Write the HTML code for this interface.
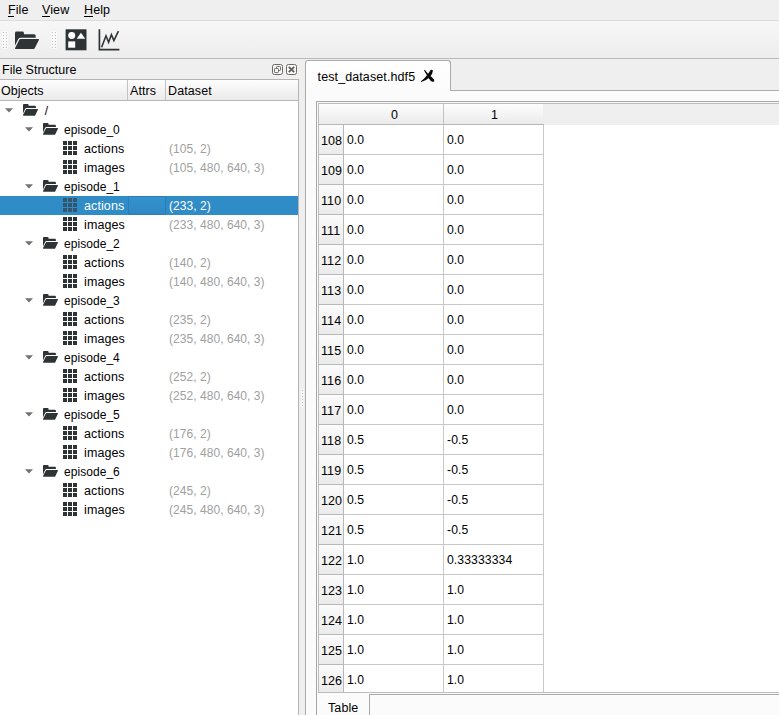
<!DOCTYPE html>
<html><head><meta charset="utf-8"><title>hdf5view</title>
<style>
html,body{margin:0;padding:0;}
body{width:779px;height:715px;overflow:hidden;position:relative;background:#efefef;
 font-family:"Liberation Sans",sans-serif;font-size:12.5px;letter-spacing:0.1px;color:#000;}
.a{position:absolute;}
.t{position:absolute;white-space:nowrap;line-height:16px;height:16px;}
.g{color:#a0a0a0;}
.sel{color:#fff;}
.n{font-size:12px;letter-spacing:0.05px;}
.c{font-size:12.2px;letter-spacing:0.09px;}
svg{position:absolute;overflow:visible;}
</style></head><body>

<div class="a" style="left:0;top:20px;width:779px;height:1px;background:#dcdcdc"></div>
<div class="t" style="left:8px;top:2px">File</div>
<div class="a" style="left:8px;top:16px;width:6px;height:1px;background:#000"></div>
<div class="t" style="left:42px;top:2px">View</div>
<div class="a" style="left:42px;top:16px;width:8px;height:1px;background:#000"></div>
<div class="t" style="left:84px;top:2px">Help</div>
<div class="a" style="left:84px;top:16px;width:9px;height:1px;background:#000"></div>
<div class="a" style="left:0;top:21px;width:779px;height:37px;background:linear-gradient(#f7f7f7,#ededed)"></div>
<div class="a" style="left:0;top:58px;width:779px;height:1px;background:#b9b9b9"></div>
<div class="a" style="left:2px;top:31px;width:6px;height:18px;background:rgba(255,255,255,0.55)"></div><div class="a" style="left:3px;top:32px;width:1px;height:1px;background:#bdbdbd"></div><div class="a" style="left:6px;top:32px;width:1px;height:1px;background:#bdbdbd"></div><div class="a" style="left:3px;top:35px;width:1px;height:1px;background:#bdbdbd"></div><div class="a" style="left:6px;top:35px;width:1px;height:1px;background:#bdbdbd"></div><div class="a" style="left:3px;top:38px;width:1px;height:1px;background:#bdbdbd"></div><div class="a" style="left:6px;top:38px;width:1px;height:1px;background:#bdbdbd"></div><div class="a" style="left:3px;top:41px;width:1px;height:1px;background:#bdbdbd"></div><div class="a" style="left:6px;top:41px;width:1px;height:1px;background:#bdbdbd"></div><div class="a" style="left:3px;top:44px;width:1px;height:1px;background:#bdbdbd"></div><div class="a" style="left:6px;top:44px;width:1px;height:1px;background:#bdbdbd"></div><div class="a" style="left:3px;top:47px;width:1px;height:1px;background:#bdbdbd"></div><div class="a" style="left:6px;top:47px;width:1px;height:1px;background:#bdbdbd"></div>
<div class="a" style="left:51px;top:31px;width:6px;height:18px;background:rgba(255,255,255,0.55)"></div><div class="a" style="left:52px;top:32px;width:1px;height:1px;background:#bdbdbd"></div><div class="a" style="left:55px;top:32px;width:1px;height:1px;background:#bdbdbd"></div><div class="a" style="left:52px;top:35px;width:1px;height:1px;background:#bdbdbd"></div><div class="a" style="left:55px;top:35px;width:1px;height:1px;background:#bdbdbd"></div><div class="a" style="left:52px;top:38px;width:1px;height:1px;background:#bdbdbd"></div><div class="a" style="left:55px;top:38px;width:1px;height:1px;background:#bdbdbd"></div><div class="a" style="left:52px;top:41px;width:1px;height:1px;background:#bdbdbd"></div><div class="a" style="left:55px;top:41px;width:1px;height:1px;background:#bdbdbd"></div><div class="a" style="left:52px;top:44px;width:1px;height:1px;background:#bdbdbd"></div><div class="a" style="left:55px;top:44px;width:1px;height:1px;background:#bdbdbd"></div><div class="a" style="left:52px;top:47px;width:1px;height:1px;background:#bdbdbd"></div><div class="a" style="left:55px;top:47px;width:1px;height:1px;background:#bdbdbd"></div>
<svg style="left:10px;top:24px" width="114" height="30" viewBox="10 24 114 30"><path fill="#2e3436" d="M15 33 Q15 31.6 16.4 31.6 H22.6 Q23.9 31.6 23.9 32.9 V34.2 H34.2 Q35.7 34.2 35.7 35.7 V37.7 H20.6 Q19 37.7 18.3 39.1 L15 45.6 Z"/><path fill="#2e3436" d="M20.7 38.9 H38.2 Q39.5 38.9 38.9 40 L34.7 48.3 Q34.3 49.1 33.4 49.1 H15.7 Q14.5 49.1 15.1 48.1 L19.3 39.8 Q19.8 38.9 20.7 38.9 Z"/><rect x="65.6" y="29.3" width="20.9" height="21" fill="#2e3436"/><ellipse cx="71.7" cy="35.5" rx="3.5" ry="3.4" fill="#fff"/><path d="M80.95 32.8 L85.2 38.8 H76.7Z" fill="#fff"/><rect x="68.2" y="41.4" width="7" height="6.3" fill="#fff"/><path d="M99.4 29.3 V49.6 H119.4" fill="none" stroke="#2e3436" stroke-width="1.7"/><path d="M101.6 47.2 L106 35.8 L108.6 42.2 L111.4 34.6 L113.9 40.6 L118.4 31.2" fill="none" stroke="#2e3436" stroke-width="1.6" stroke-linejoin="miter"/></svg>
<div class="t" style="left:2px;top:62px;letter-spacing:0">File Structure</div>
<svg style="left:272px;top:64px" width="11" height="11" viewBox="0 0 11 11"><rect x="0.5" y="0.5" width="10" height="10" rx="2" fill="#f7f7f7" stroke="#6c6965"/><rect x="4.5" y="2.5" width="4" height="4" rx="0.8" fill="none" stroke="#6c6965"/><rect x="2.5" y="4.5" width="4" height="4" rx="0.8" fill="#f7f7f7" stroke="#6c6965"/></svg>
<svg style="left:286px;top:64px" width="11" height="11" viewBox="0 0 11 11"><rect x="0.5" y="0.5" width="10" height="10" rx="2" fill="#f7f7f7" stroke="#6c6965"/><path d="M2.8 2.8 L8.2 8.2 M8.2 2.8 L2.8 8.2" stroke="#605d5a" stroke-width="1.8"/></svg>
<div class="a" style="left:0;top:79px;width:298px;height:640px;background:#fff"></div>
<div class="a" style="left:298px;top:79px;width:1px;height:640px;background:#b4b4b4"></div>
<div class="a" style="left:0;top:79px;width:299px;height:1px;background:#b4b4b4"></div>
<div class="a" style="left:0;top:80px;width:298px;height:20px;background:linear-gradient(#fdfdfd,#ebebeb)"></div>
<div class="a" style="left:0;top:100px;width:298px;height:1px;background:#b8b8b8"></div>
<div class="a" style="left:127px;top:80px;width:1px;height:20px;background:#c2c2c2"></div>
<div class="a" style="left:165px;top:80px;width:1px;height:20px;background:#c2c2c2"></div>
<div class="t" style="left:1px;top:83px;letter-spacing:0">Objects</div>
<div class="t" style="left:130px;top:83px">Attrs</div>
<div class="t" style="left:168px;top:83px">Dataset</div>
<svg style="left:5px;top:108px" width="8" height="5" viewBox="0 0 8 5"><path d="M0 0.3 H8 L4 4.6Z" fill="#727272"/></svg>
<svg style="left:23px;top:102px" width="16" height="16" viewBox="0 0 16 16"><g transform="translate(0,2) scale(0.624,0.674) translate(-15,-31.6)" fill="#2e3436"><path d="M15 33 Q15 31.6 16.4 31.6 H22.6 Q23.9 31.6 23.9 32.9 V34.2 H34.2 Q35.7 34.2 35.7 35.7 V37.5 H20.6 Q19 37.5 18.3 38.9 L15 45.6 Z"/><path d="M20.7 39.1 H38.2 Q39.5 39.1 38.9 40.2 L34.7 48.3 Q34.3 49.1 33.4 49.1 H15.7 Q14.5 49.1 15.1 48.1 L19.3 40 Q19.8 39.1 20.7 39.1 Z"/></g></svg>
<div class="t n" style="left:44.7px;top:103px">/</div>
<svg style="left:25px;top:127px" width="8" height="5" viewBox="0 0 8 5"><path d="M0 0.3 H8 L4 4.6Z" fill="#727272"/></svg>
<svg style="left:43px;top:121px" width="16" height="16" viewBox="0 0 16 16"><g transform="translate(0,2) scale(0.624,0.674) translate(-15,-31.6)" fill="#2e3436"><path d="M15 33 Q15 31.6 16.4 31.6 H22.6 Q23.9 31.6 23.9 32.9 V34.2 H34.2 Q35.7 34.2 35.7 35.7 V37.5 H20.6 Q19 37.5 18.3 38.9 L15 45.6 Z"/><path d="M20.7 39.1 H38.2 Q39.5 39.1 38.9 40.2 L34.7 48.3 Q34.3 49.1 33.4 49.1 H15.7 Q14.5 49.1 15.1 48.1 L19.3 40 Q19.8 39.1 20.7 39.1 Z"/></g></svg>
<div class="t n" style="left:64px;top:122px">episode_0</div>
<svg style="left:62px;top:140px" width="16" height="16" viewBox="0 0 16 16"><rect x="1" y="1" width="4" height="4" fill="#2e3436"/><rect x="6" y="1" width="4" height="4" fill="#2e3436"/><rect x="11" y="1" width="4" height="4" fill="#2e3436"/><rect x="1" y="6" width="4" height="4" fill="#2e3436"/><rect x="6" y="6" width="4" height="4" fill="#2e3436"/><rect x="11" y="6" width="4" height="4" fill="#2e3436"/><rect x="1" y="11" width="4" height="4" fill="#2e3436"/><rect x="6" y="11" width="4" height="4" fill="#2e3436"/><rect x="11" y="11" width="4" height="4" fill="#2e3436"/></svg>
<div class="t" style="left:84px;top:141px">actions</div>
<div class="t g n" style="left:169px;top:141px">(105, 2)</div>
<svg style="left:62px;top:159px" width="16" height="16" viewBox="0 0 16 16"><rect x="1" y="1" width="4" height="4" fill="#2e3436"/><rect x="6" y="1" width="4" height="4" fill="#2e3436"/><rect x="11" y="1" width="4" height="4" fill="#2e3436"/><rect x="1" y="6" width="4" height="4" fill="#2e3436"/><rect x="6" y="6" width="4" height="4" fill="#2e3436"/><rect x="11" y="6" width="4" height="4" fill="#2e3436"/><rect x="1" y="11" width="4" height="4" fill="#2e3436"/><rect x="6" y="11" width="4" height="4" fill="#2e3436"/><rect x="11" y="11" width="4" height="4" fill="#2e3436"/></svg>
<div class="t" style="left:84px;top:160px">images</div>
<div class="t g n" style="left:169px;top:160px">(105, 480, 640, 3)</div>
<svg style="left:25px;top:184px" width="8" height="5" viewBox="0 0 8 5"><path d="M0 0.3 H8 L4 4.6Z" fill="#727272"/></svg>
<svg style="left:43px;top:178px" width="16" height="16" viewBox="0 0 16 16"><g transform="translate(0,2) scale(0.624,0.674) translate(-15,-31.6)" fill="#2e3436"><path d="M15 33 Q15 31.6 16.4 31.6 H22.6 Q23.9 31.6 23.9 32.9 V34.2 H34.2 Q35.7 34.2 35.7 35.7 V37.5 H20.6 Q19 37.5 18.3 38.9 L15 45.6 Z"/><path d="M20.7 39.1 H38.2 Q39.5 39.1 38.9 40.2 L34.7 48.3 Q34.3 49.1 33.4 49.1 H15.7 Q14.5 49.1 15.1 48.1 L19.3 40 Q19.8 39.1 20.7 39.1 Z"/></g></svg>
<div class="t n" style="left:64px;top:179px">episode_1</div>
<div class="a" style="left:0;top:196px;width:298px;height:19px;background:#308cc6"></div>
<div class="a" style="left:128px;top:196px;width:38px;height:19px;box-sizing:border-box;border:1px solid #2b7eb5;background:linear-gradient(#3492ce,#2f88c2)"></div>
<svg style="left:62px;top:197px" width="16" height="16" viewBox="0 0 16 16"><rect x="1" y="1" width="4" height="4" fill="#34566d"/><rect x="6" y="1" width="4" height="4" fill="#34566d"/><rect x="11" y="1" width="4" height="4" fill="#34566d"/><rect x="1" y="6" width="4" height="4" fill="#34566d"/><rect x="6" y="6" width="4" height="4" fill="#34566d"/><rect x="11" y="6" width="4" height="4" fill="#34566d"/><rect x="1" y="11" width="4" height="4" fill="#34566d"/><rect x="6" y="11" width="4" height="4" fill="#34566d"/><rect x="11" y="11" width="4" height="4" fill="#34566d"/></svg>
<div class="t sel" style="left:84px;top:198px">actions</div>
<div class="t sel n" style="left:169px;top:198px">(233, 2)</div>
<svg style="left:62px;top:216px" width="16" height="16" viewBox="0 0 16 16"><rect x="1" y="1" width="4" height="4" fill="#2e3436"/><rect x="6" y="1" width="4" height="4" fill="#2e3436"/><rect x="11" y="1" width="4" height="4" fill="#2e3436"/><rect x="1" y="6" width="4" height="4" fill="#2e3436"/><rect x="6" y="6" width="4" height="4" fill="#2e3436"/><rect x="11" y="6" width="4" height="4" fill="#2e3436"/><rect x="1" y="11" width="4" height="4" fill="#2e3436"/><rect x="6" y="11" width="4" height="4" fill="#2e3436"/><rect x="11" y="11" width="4" height="4" fill="#2e3436"/></svg>
<div class="t" style="left:84px;top:217px">images</div>
<div class="t g n" style="left:169px;top:217px">(233, 480, 640, 3)</div>
<svg style="left:25px;top:241px" width="8" height="5" viewBox="0 0 8 5"><path d="M0 0.3 H8 L4 4.6Z" fill="#727272"/></svg>
<svg style="left:43px;top:235px" width="16" height="16" viewBox="0 0 16 16"><g transform="translate(0,2) scale(0.624,0.674) translate(-15,-31.6)" fill="#2e3436"><path d="M15 33 Q15 31.6 16.4 31.6 H22.6 Q23.9 31.6 23.9 32.9 V34.2 H34.2 Q35.7 34.2 35.7 35.7 V37.5 H20.6 Q19 37.5 18.3 38.9 L15 45.6 Z"/><path d="M20.7 39.1 H38.2 Q39.5 39.1 38.9 40.2 L34.7 48.3 Q34.3 49.1 33.4 49.1 H15.7 Q14.5 49.1 15.1 48.1 L19.3 40 Q19.8 39.1 20.7 39.1 Z"/></g></svg>
<div class="t n" style="left:64px;top:236px">episode_2</div>
<svg style="left:62px;top:254px" width="16" height="16" viewBox="0 0 16 16"><rect x="1" y="1" width="4" height="4" fill="#2e3436"/><rect x="6" y="1" width="4" height="4" fill="#2e3436"/><rect x="11" y="1" width="4" height="4" fill="#2e3436"/><rect x="1" y="6" width="4" height="4" fill="#2e3436"/><rect x="6" y="6" width="4" height="4" fill="#2e3436"/><rect x="11" y="6" width="4" height="4" fill="#2e3436"/><rect x="1" y="11" width="4" height="4" fill="#2e3436"/><rect x="6" y="11" width="4" height="4" fill="#2e3436"/><rect x="11" y="11" width="4" height="4" fill="#2e3436"/></svg>
<div class="t" style="left:84px;top:255px">actions</div>
<div class="t g n" style="left:169px;top:255px">(140, 2)</div>
<svg style="left:62px;top:273px" width="16" height="16" viewBox="0 0 16 16"><rect x="1" y="1" width="4" height="4" fill="#2e3436"/><rect x="6" y="1" width="4" height="4" fill="#2e3436"/><rect x="11" y="1" width="4" height="4" fill="#2e3436"/><rect x="1" y="6" width="4" height="4" fill="#2e3436"/><rect x="6" y="6" width="4" height="4" fill="#2e3436"/><rect x="11" y="6" width="4" height="4" fill="#2e3436"/><rect x="1" y="11" width="4" height="4" fill="#2e3436"/><rect x="6" y="11" width="4" height="4" fill="#2e3436"/><rect x="11" y="11" width="4" height="4" fill="#2e3436"/></svg>
<div class="t" style="left:84px;top:274px">images</div>
<div class="t g n" style="left:169px;top:274px">(140, 480, 640, 3)</div>
<svg style="left:25px;top:298px" width="8" height="5" viewBox="0 0 8 5"><path d="M0 0.3 H8 L4 4.6Z" fill="#727272"/></svg>
<svg style="left:43px;top:292px" width="16" height="16" viewBox="0 0 16 16"><g transform="translate(0,2) scale(0.624,0.674) translate(-15,-31.6)" fill="#2e3436"><path d="M15 33 Q15 31.6 16.4 31.6 H22.6 Q23.9 31.6 23.9 32.9 V34.2 H34.2 Q35.7 34.2 35.7 35.7 V37.5 H20.6 Q19 37.5 18.3 38.9 L15 45.6 Z"/><path d="M20.7 39.1 H38.2 Q39.5 39.1 38.9 40.2 L34.7 48.3 Q34.3 49.1 33.4 49.1 H15.7 Q14.5 49.1 15.1 48.1 L19.3 40 Q19.8 39.1 20.7 39.1 Z"/></g></svg>
<div class="t n" style="left:64px;top:293px">episode_3</div>
<svg style="left:62px;top:311px" width="16" height="16" viewBox="0 0 16 16"><rect x="1" y="1" width="4" height="4" fill="#2e3436"/><rect x="6" y="1" width="4" height="4" fill="#2e3436"/><rect x="11" y="1" width="4" height="4" fill="#2e3436"/><rect x="1" y="6" width="4" height="4" fill="#2e3436"/><rect x="6" y="6" width="4" height="4" fill="#2e3436"/><rect x="11" y="6" width="4" height="4" fill="#2e3436"/><rect x="1" y="11" width="4" height="4" fill="#2e3436"/><rect x="6" y="11" width="4" height="4" fill="#2e3436"/><rect x="11" y="11" width="4" height="4" fill="#2e3436"/></svg>
<div class="t" style="left:84px;top:312px">actions</div>
<div class="t g n" style="left:169px;top:312px">(235, 2)</div>
<svg style="left:62px;top:330px" width="16" height="16" viewBox="0 0 16 16"><rect x="1" y="1" width="4" height="4" fill="#2e3436"/><rect x="6" y="1" width="4" height="4" fill="#2e3436"/><rect x="11" y="1" width="4" height="4" fill="#2e3436"/><rect x="1" y="6" width="4" height="4" fill="#2e3436"/><rect x="6" y="6" width="4" height="4" fill="#2e3436"/><rect x="11" y="6" width="4" height="4" fill="#2e3436"/><rect x="1" y="11" width="4" height="4" fill="#2e3436"/><rect x="6" y="11" width="4" height="4" fill="#2e3436"/><rect x="11" y="11" width="4" height="4" fill="#2e3436"/></svg>
<div class="t" style="left:84px;top:331px">images</div>
<div class="t g n" style="left:169px;top:331px">(235, 480, 640, 3)</div>
<svg style="left:25px;top:355px" width="8" height="5" viewBox="0 0 8 5"><path d="M0 0.3 H8 L4 4.6Z" fill="#727272"/></svg>
<svg style="left:43px;top:349px" width="16" height="16" viewBox="0 0 16 16"><g transform="translate(0,2) scale(0.624,0.674) translate(-15,-31.6)" fill="#2e3436"><path d="M15 33 Q15 31.6 16.4 31.6 H22.6 Q23.9 31.6 23.9 32.9 V34.2 H34.2 Q35.7 34.2 35.7 35.7 V37.5 H20.6 Q19 37.5 18.3 38.9 L15 45.6 Z"/><path d="M20.7 39.1 H38.2 Q39.5 39.1 38.9 40.2 L34.7 48.3 Q34.3 49.1 33.4 49.1 H15.7 Q14.5 49.1 15.1 48.1 L19.3 40 Q19.8 39.1 20.7 39.1 Z"/></g></svg>
<div class="t n" style="left:64px;top:350px">episode_4</div>
<svg style="left:62px;top:368px" width="16" height="16" viewBox="0 0 16 16"><rect x="1" y="1" width="4" height="4" fill="#2e3436"/><rect x="6" y="1" width="4" height="4" fill="#2e3436"/><rect x="11" y="1" width="4" height="4" fill="#2e3436"/><rect x="1" y="6" width="4" height="4" fill="#2e3436"/><rect x="6" y="6" width="4" height="4" fill="#2e3436"/><rect x="11" y="6" width="4" height="4" fill="#2e3436"/><rect x="1" y="11" width="4" height="4" fill="#2e3436"/><rect x="6" y="11" width="4" height="4" fill="#2e3436"/><rect x="11" y="11" width="4" height="4" fill="#2e3436"/></svg>
<div class="t" style="left:84px;top:369px">actions</div>
<div class="t g n" style="left:169px;top:369px">(252, 2)</div>
<svg style="left:62px;top:387px" width="16" height="16" viewBox="0 0 16 16"><rect x="1" y="1" width="4" height="4" fill="#2e3436"/><rect x="6" y="1" width="4" height="4" fill="#2e3436"/><rect x="11" y="1" width="4" height="4" fill="#2e3436"/><rect x="1" y="6" width="4" height="4" fill="#2e3436"/><rect x="6" y="6" width="4" height="4" fill="#2e3436"/><rect x="11" y="6" width="4" height="4" fill="#2e3436"/><rect x="1" y="11" width="4" height="4" fill="#2e3436"/><rect x="6" y="11" width="4" height="4" fill="#2e3436"/><rect x="11" y="11" width="4" height="4" fill="#2e3436"/></svg>
<div class="t" style="left:84px;top:388px">images</div>
<div class="t g n" style="left:169px;top:388px">(252, 480, 640, 3)</div>
<svg style="left:25px;top:412px" width="8" height="5" viewBox="0 0 8 5"><path d="M0 0.3 H8 L4 4.6Z" fill="#727272"/></svg>
<svg style="left:43px;top:406px" width="16" height="16" viewBox="0 0 16 16"><g transform="translate(0,2) scale(0.624,0.674) translate(-15,-31.6)" fill="#2e3436"><path d="M15 33 Q15 31.6 16.4 31.6 H22.6 Q23.9 31.6 23.9 32.9 V34.2 H34.2 Q35.7 34.2 35.7 35.7 V37.5 H20.6 Q19 37.5 18.3 38.9 L15 45.6 Z"/><path d="M20.7 39.1 H38.2 Q39.5 39.1 38.9 40.2 L34.7 48.3 Q34.3 49.1 33.4 49.1 H15.7 Q14.5 49.1 15.1 48.1 L19.3 40 Q19.8 39.1 20.7 39.1 Z"/></g></svg>
<div class="t n" style="left:64px;top:407px">episode_5</div>
<svg style="left:62px;top:425px" width="16" height="16" viewBox="0 0 16 16"><rect x="1" y="1" width="4" height="4" fill="#2e3436"/><rect x="6" y="1" width="4" height="4" fill="#2e3436"/><rect x="11" y="1" width="4" height="4" fill="#2e3436"/><rect x="1" y="6" width="4" height="4" fill="#2e3436"/><rect x="6" y="6" width="4" height="4" fill="#2e3436"/><rect x="11" y="6" width="4" height="4" fill="#2e3436"/><rect x="1" y="11" width="4" height="4" fill="#2e3436"/><rect x="6" y="11" width="4" height="4" fill="#2e3436"/><rect x="11" y="11" width="4" height="4" fill="#2e3436"/></svg>
<div class="t" style="left:84px;top:426px">actions</div>
<div class="t g n" style="left:169px;top:426px">(176, 2)</div>
<svg style="left:62px;top:444px" width="16" height="16" viewBox="0 0 16 16"><rect x="1" y="1" width="4" height="4" fill="#2e3436"/><rect x="6" y="1" width="4" height="4" fill="#2e3436"/><rect x="11" y="1" width="4" height="4" fill="#2e3436"/><rect x="1" y="6" width="4" height="4" fill="#2e3436"/><rect x="6" y="6" width="4" height="4" fill="#2e3436"/><rect x="11" y="6" width="4" height="4" fill="#2e3436"/><rect x="1" y="11" width="4" height="4" fill="#2e3436"/><rect x="6" y="11" width="4" height="4" fill="#2e3436"/><rect x="11" y="11" width="4" height="4" fill="#2e3436"/></svg>
<div class="t" style="left:84px;top:445px">images</div>
<div class="t g n" style="left:169px;top:445px">(176, 480, 640, 3)</div>
<svg style="left:25px;top:469px" width="8" height="5" viewBox="0 0 8 5"><path d="M0 0.3 H8 L4 4.6Z" fill="#727272"/></svg>
<svg style="left:43px;top:463px" width="16" height="16" viewBox="0 0 16 16"><g transform="translate(0,2) scale(0.624,0.674) translate(-15,-31.6)" fill="#2e3436"><path d="M15 33 Q15 31.6 16.4 31.6 H22.6 Q23.9 31.6 23.9 32.9 V34.2 H34.2 Q35.7 34.2 35.7 35.7 V37.5 H20.6 Q19 37.5 18.3 38.9 L15 45.6 Z"/><path d="M20.7 39.1 H38.2 Q39.5 39.1 38.9 40.2 L34.7 48.3 Q34.3 49.1 33.4 49.1 H15.7 Q14.5 49.1 15.1 48.1 L19.3 40 Q19.8 39.1 20.7 39.1 Z"/></g></svg>
<div class="t n" style="left:64px;top:464px">episode_6</div>
<svg style="left:62px;top:482px" width="16" height="16" viewBox="0 0 16 16"><rect x="1" y="1" width="4" height="4" fill="#2e3436"/><rect x="6" y="1" width="4" height="4" fill="#2e3436"/><rect x="11" y="1" width="4" height="4" fill="#2e3436"/><rect x="1" y="6" width="4" height="4" fill="#2e3436"/><rect x="6" y="6" width="4" height="4" fill="#2e3436"/><rect x="11" y="6" width="4" height="4" fill="#2e3436"/><rect x="1" y="11" width="4" height="4" fill="#2e3436"/><rect x="6" y="11" width="4" height="4" fill="#2e3436"/><rect x="11" y="11" width="4" height="4" fill="#2e3436"/></svg>
<div class="t" style="left:84px;top:483px">actions</div>
<div class="t g n" style="left:169px;top:483px">(245, 2)</div>
<svg style="left:62px;top:501px" width="16" height="16" viewBox="0 0 16 16"><rect x="1" y="1" width="4" height="4" fill="#2e3436"/><rect x="6" y="1" width="4" height="4" fill="#2e3436"/><rect x="11" y="1" width="4" height="4" fill="#2e3436"/><rect x="1" y="6" width="4" height="4" fill="#2e3436"/><rect x="6" y="6" width="4" height="4" fill="#2e3436"/><rect x="11" y="6" width="4" height="4" fill="#2e3436"/><rect x="1" y="11" width="4" height="4" fill="#2e3436"/><rect x="6" y="11" width="4" height="4" fill="#2e3436"/><rect x="11" y="11" width="4" height="4" fill="#2e3436"/></svg>
<div class="t" style="left:84px;top:502px">images</div>
<div class="t g n" style="left:169px;top:502px">(245, 480, 640, 3)</div>
<div class="a" style="left:301px;top:389px;width:3px;height:18px;background:rgba(255,255,255,0.45)"></div>
<div class="a" style="left:302px;top:390px;width:1px;height:1px;background:#c2c2c2"></div>
<div class="a" style="left:302px;top:393px;width:1px;height:1px;background:#c2c2c2"></div>
<div class="a" style="left:302px;top:396px;width:1px;height:1px;background:#c2c2c2"></div>
<div class="a" style="left:302px;top:399px;width:1px;height:1px;background:#c2c2c2"></div>
<div class="a" style="left:302px;top:402px;width:1px;height:1px;background:#c2c2c2"></div>
<div class="a" style="left:302px;top:405px;width:1px;height:1px;background:#c2c2c2"></div>
<div class="a" style="left:305px;top:90px;width:480px;height:640px;background:#fbfbfb;border:1px solid #aaa;box-sizing:border-box"></div>
<div class="a" style="left:305px;top:60px;width:146px;height:31px;background:linear-gradient(#fff,#fbfbfb);border:1px solid #aaa;border-bottom:none;border-radius:3px 3px 0 0;box-sizing:border-box"></div>
<div class="t" style="left:317.6px;top:69px">test_dataset.hdf5</div>
<svg style="left:416px;top:66px" width="24" height="20" viewBox="416 66 24 20"><path fill="#0a0a0a" d="M424.8 69.8 L428.6 74.4 Q431.5 76.5 434.0 79.4 Q434.8 81.7 432.9 81.8 Q431.6 81.8 430.8 81.0 Q428.5 78.5 427.0 75.5 L424.0 70.4 Z"/><path fill="#0a0a0a" d="M430.6 70.0 Q431.9 69.2 433.0 70.6 Q432.8 74 429.5 77.6 Q426.5 80.6 421.2 81.9 L420.9 81.3 Q423.5 79.5 425.5 77.0 Q428.5 73.5 430.6 70.0 Z"/></svg>
<div class="a" style="left:316px;top:101px;width:470px;height:1px;background:#a6a6a6"></div>
<div class="a" style="left:316px;top:101px;width:1px;height:620px;background:#a6a6a6"></div>
<div class="a" style="left:318px;top:103px;width:470px;height:590px;background:#fff"></div>
<div class="a" style="left:318px;top:103px;width:470px;height:1px;background:#bcbcbc"></div>
<div class="a" style="left:318px;top:103px;width:1px;height:590px;background:#bcbcbc"></div>
<div class="a" style="left:318px;top:692px;width:470px;height:1px;background:#bcbcbc"></div>
<div class="a" style="left:319px;top:104px;width:465px;height:21px;background:#efefef"></div>
<div class="a" style="left:319px;top:104px;width:224px;height:20px;background:linear-gradient(#fdfdfd,#ebebeb)"></div>
<div class="a" style="left:319px;top:124px;width:225px;height:1px;background:#b8b8b8"></div>
<div class="a" style="left:443px;top:104px;width:1px;height:20px;background:#c2c2c2"></div>
<div class="t" style="left:345px;top:107px;width:99px;text-align:center">0</div>
<div class="t" style="left:445px;top:107px;width:99px;text-align:center">1</div>
<div class="a" style="left:343px;top:125px;width:1px;height:567px;background:#b8b8b8"></div>
<div class="a" style="left:443px;top:125px;width:1px;height:567px;background:#c8c8c8"></div>
<div class="a" style="left:543px;top:125px;width:1px;height:567px;background:#c8c8c8"></div>
<div class="a" style="left:319px;top:125px;width:24px;height:29px;background:linear-gradient(#fbfbfb,#ebebeb)"></div>
<div class="a" style="left:319px;top:154px;width:24px;height:1px;background:#b8b8b8"></div>
<div class="a" style="left:344px;top:154px;width:200px;height:1px;background:#c8c8c8"></div>
<div class="t" style="left:321px;top:133px">108</div>
<div class="t c" style="left:347px;top:132px">0.0</div>
<div class="t c" style="left:447px;top:132px">0.0</div>
<div class="a" style="left:319px;top:155px;width:24px;height:29px;background:linear-gradient(#fbfbfb,#ebebeb)"></div>
<div class="a" style="left:319px;top:184px;width:24px;height:1px;background:#b8b8b8"></div>
<div class="a" style="left:344px;top:184px;width:200px;height:1px;background:#c8c8c8"></div>
<div class="t" style="left:321px;top:163px">109</div>
<div class="t c" style="left:347px;top:162px">0.0</div>
<div class="t c" style="left:447px;top:162px">0.0</div>
<div class="a" style="left:319px;top:185px;width:24px;height:29px;background:linear-gradient(#fbfbfb,#ebebeb)"></div>
<div class="a" style="left:319px;top:214px;width:24px;height:1px;background:#b8b8b8"></div>
<div class="a" style="left:344px;top:214px;width:200px;height:1px;background:#c8c8c8"></div>
<div class="t" style="left:321px;top:193px">110</div>
<div class="t c" style="left:347px;top:192px">0.0</div>
<div class="t c" style="left:447px;top:192px">0.0</div>
<div class="a" style="left:319px;top:215px;width:24px;height:29px;background:linear-gradient(#fbfbfb,#ebebeb)"></div>
<div class="a" style="left:319px;top:244px;width:24px;height:1px;background:#b8b8b8"></div>
<div class="a" style="left:344px;top:244px;width:200px;height:1px;background:#c8c8c8"></div>
<div class="t" style="left:321px;top:223px">111</div>
<div class="t c" style="left:347px;top:222px">0.0</div>
<div class="t c" style="left:447px;top:222px">0.0</div>
<div class="a" style="left:319px;top:245px;width:24px;height:29px;background:linear-gradient(#fbfbfb,#ebebeb)"></div>
<div class="a" style="left:319px;top:274px;width:24px;height:1px;background:#b8b8b8"></div>
<div class="a" style="left:344px;top:274px;width:200px;height:1px;background:#c8c8c8"></div>
<div class="t" style="left:321px;top:253px">112</div>
<div class="t c" style="left:347px;top:252px">0.0</div>
<div class="t c" style="left:447px;top:252px">0.0</div>
<div class="a" style="left:319px;top:275px;width:24px;height:29px;background:linear-gradient(#fbfbfb,#ebebeb)"></div>
<div class="a" style="left:319px;top:304px;width:24px;height:1px;background:#b8b8b8"></div>
<div class="a" style="left:344px;top:304px;width:200px;height:1px;background:#c8c8c8"></div>
<div class="t" style="left:321px;top:283px">113</div>
<div class="t c" style="left:347px;top:282px">0.0</div>
<div class="t c" style="left:447px;top:282px">0.0</div>
<div class="a" style="left:319px;top:305px;width:24px;height:29px;background:linear-gradient(#fbfbfb,#ebebeb)"></div>
<div class="a" style="left:319px;top:334px;width:24px;height:1px;background:#b8b8b8"></div>
<div class="a" style="left:344px;top:334px;width:200px;height:1px;background:#c8c8c8"></div>
<div class="t" style="left:321px;top:313px">114</div>
<div class="t c" style="left:347px;top:312px">0.0</div>
<div class="t c" style="left:447px;top:312px">0.0</div>
<div class="a" style="left:319px;top:335px;width:24px;height:29px;background:linear-gradient(#fbfbfb,#ebebeb)"></div>
<div class="a" style="left:319px;top:364px;width:24px;height:1px;background:#b8b8b8"></div>
<div class="a" style="left:344px;top:364px;width:200px;height:1px;background:#c8c8c8"></div>
<div class="t" style="left:321px;top:343px">115</div>
<div class="t c" style="left:347px;top:342px">0.0</div>
<div class="t c" style="left:447px;top:342px">0.0</div>
<div class="a" style="left:319px;top:365px;width:24px;height:29px;background:linear-gradient(#fbfbfb,#ebebeb)"></div>
<div class="a" style="left:319px;top:394px;width:24px;height:1px;background:#b8b8b8"></div>
<div class="a" style="left:344px;top:394px;width:200px;height:1px;background:#c8c8c8"></div>
<div class="t" style="left:321px;top:373px">116</div>
<div class="t c" style="left:347px;top:372px">0.0</div>
<div class="t c" style="left:447px;top:372px">0.0</div>
<div class="a" style="left:319px;top:395px;width:24px;height:29px;background:linear-gradient(#fbfbfb,#ebebeb)"></div>
<div class="a" style="left:319px;top:424px;width:24px;height:1px;background:#b8b8b8"></div>
<div class="a" style="left:344px;top:424px;width:200px;height:1px;background:#c8c8c8"></div>
<div class="t" style="left:321px;top:403px">117</div>
<div class="t c" style="left:347px;top:402px">0.0</div>
<div class="t c" style="left:447px;top:402px">0.0</div>
<div class="a" style="left:319px;top:425px;width:24px;height:29px;background:linear-gradient(#fbfbfb,#ebebeb)"></div>
<div class="a" style="left:319px;top:454px;width:24px;height:1px;background:#b8b8b8"></div>
<div class="a" style="left:344px;top:454px;width:200px;height:1px;background:#c8c8c8"></div>
<div class="t" style="left:321px;top:433px">118</div>
<div class="t c" style="left:347px;top:432px">0.5</div>
<div class="t c" style="left:447px;top:432px">-0.5</div>
<div class="a" style="left:319px;top:455px;width:24px;height:29px;background:linear-gradient(#fbfbfb,#ebebeb)"></div>
<div class="a" style="left:319px;top:484px;width:24px;height:1px;background:#b8b8b8"></div>
<div class="a" style="left:344px;top:484px;width:200px;height:1px;background:#c8c8c8"></div>
<div class="t" style="left:321px;top:463px">119</div>
<div class="t c" style="left:347px;top:462px">0.5</div>
<div class="t c" style="left:447px;top:462px">-0.5</div>
<div class="a" style="left:319px;top:485px;width:24px;height:29px;background:linear-gradient(#fbfbfb,#ebebeb)"></div>
<div class="a" style="left:319px;top:514px;width:24px;height:1px;background:#b8b8b8"></div>
<div class="a" style="left:344px;top:514px;width:200px;height:1px;background:#c8c8c8"></div>
<div class="t" style="left:321px;top:493px">120</div>
<div class="t c" style="left:347px;top:492px">0.5</div>
<div class="t c" style="left:447px;top:492px">-0.5</div>
<div class="a" style="left:319px;top:515px;width:24px;height:29px;background:linear-gradient(#fbfbfb,#ebebeb)"></div>
<div class="a" style="left:319px;top:544px;width:24px;height:1px;background:#b8b8b8"></div>
<div class="a" style="left:344px;top:544px;width:200px;height:1px;background:#c8c8c8"></div>
<div class="t" style="left:321px;top:523px">121</div>
<div class="t c" style="left:347px;top:522px">0.5</div>
<div class="t c" style="left:447px;top:522px">-0.5</div>
<div class="a" style="left:319px;top:545px;width:24px;height:29px;background:linear-gradient(#fbfbfb,#ebebeb)"></div>
<div class="a" style="left:319px;top:574px;width:24px;height:1px;background:#b8b8b8"></div>
<div class="a" style="left:344px;top:574px;width:200px;height:1px;background:#c8c8c8"></div>
<div class="t" style="left:321px;top:553px">122</div>
<div class="t c" style="left:347px;top:552px">1.0</div>
<div class="t c" style="left:447px;top:552px">0.33333334</div>
<div class="a" style="left:319px;top:575px;width:24px;height:29px;background:linear-gradient(#fbfbfb,#ebebeb)"></div>
<div class="a" style="left:319px;top:604px;width:24px;height:1px;background:#b8b8b8"></div>
<div class="a" style="left:344px;top:604px;width:200px;height:1px;background:#c8c8c8"></div>
<div class="t" style="left:321px;top:583px">123</div>
<div class="t c" style="left:347px;top:582px">1.0</div>
<div class="t c" style="left:447px;top:582px">1.0</div>
<div class="a" style="left:319px;top:605px;width:24px;height:29px;background:linear-gradient(#fbfbfb,#ebebeb)"></div>
<div class="a" style="left:319px;top:634px;width:24px;height:1px;background:#b8b8b8"></div>
<div class="a" style="left:344px;top:634px;width:200px;height:1px;background:#c8c8c8"></div>
<div class="t" style="left:321px;top:613px">124</div>
<div class="t c" style="left:347px;top:612px">1.0</div>
<div class="t c" style="left:447px;top:612px">1.0</div>
<div class="a" style="left:319px;top:635px;width:24px;height:29px;background:linear-gradient(#fbfbfb,#ebebeb)"></div>
<div class="a" style="left:319px;top:664px;width:24px;height:1px;background:#b8b8b8"></div>
<div class="a" style="left:344px;top:664px;width:200px;height:1px;background:#c8c8c8"></div>
<div class="t" style="left:321px;top:643px">125</div>
<div class="t c" style="left:347px;top:642px">1.0</div>
<div class="t c" style="left:447px;top:642px">1.0</div>
<div class="a" style="left:319px;top:665px;width:24px;height:27px;background:linear-gradient(#fbfbfb,#ebebeb)"></div>
<div class="t" style="left:321px;top:673px">126</div>
<div class="t c" style="left:347px;top:672px">1.0</div>
<div class="t c" style="left:447px;top:672px">1.0</div>
<div class="a" style="left:316px;top:693px;width:470px;height:30px;background:#fbfbfb"></div>
<div class="a" style="left:316px;top:693px;width:1px;height:30px;background:#a6a6a6"></div>
<div class="a" style="left:370px;top:694px;width:410px;height:1px;background:#aaa"></div>
<div class="a" style="left:369px;top:694px;width:1px;height:30px;background:#aaa"></div>
<div class="t" style="left:328px;top:700px">Table</div>
</body></html>
